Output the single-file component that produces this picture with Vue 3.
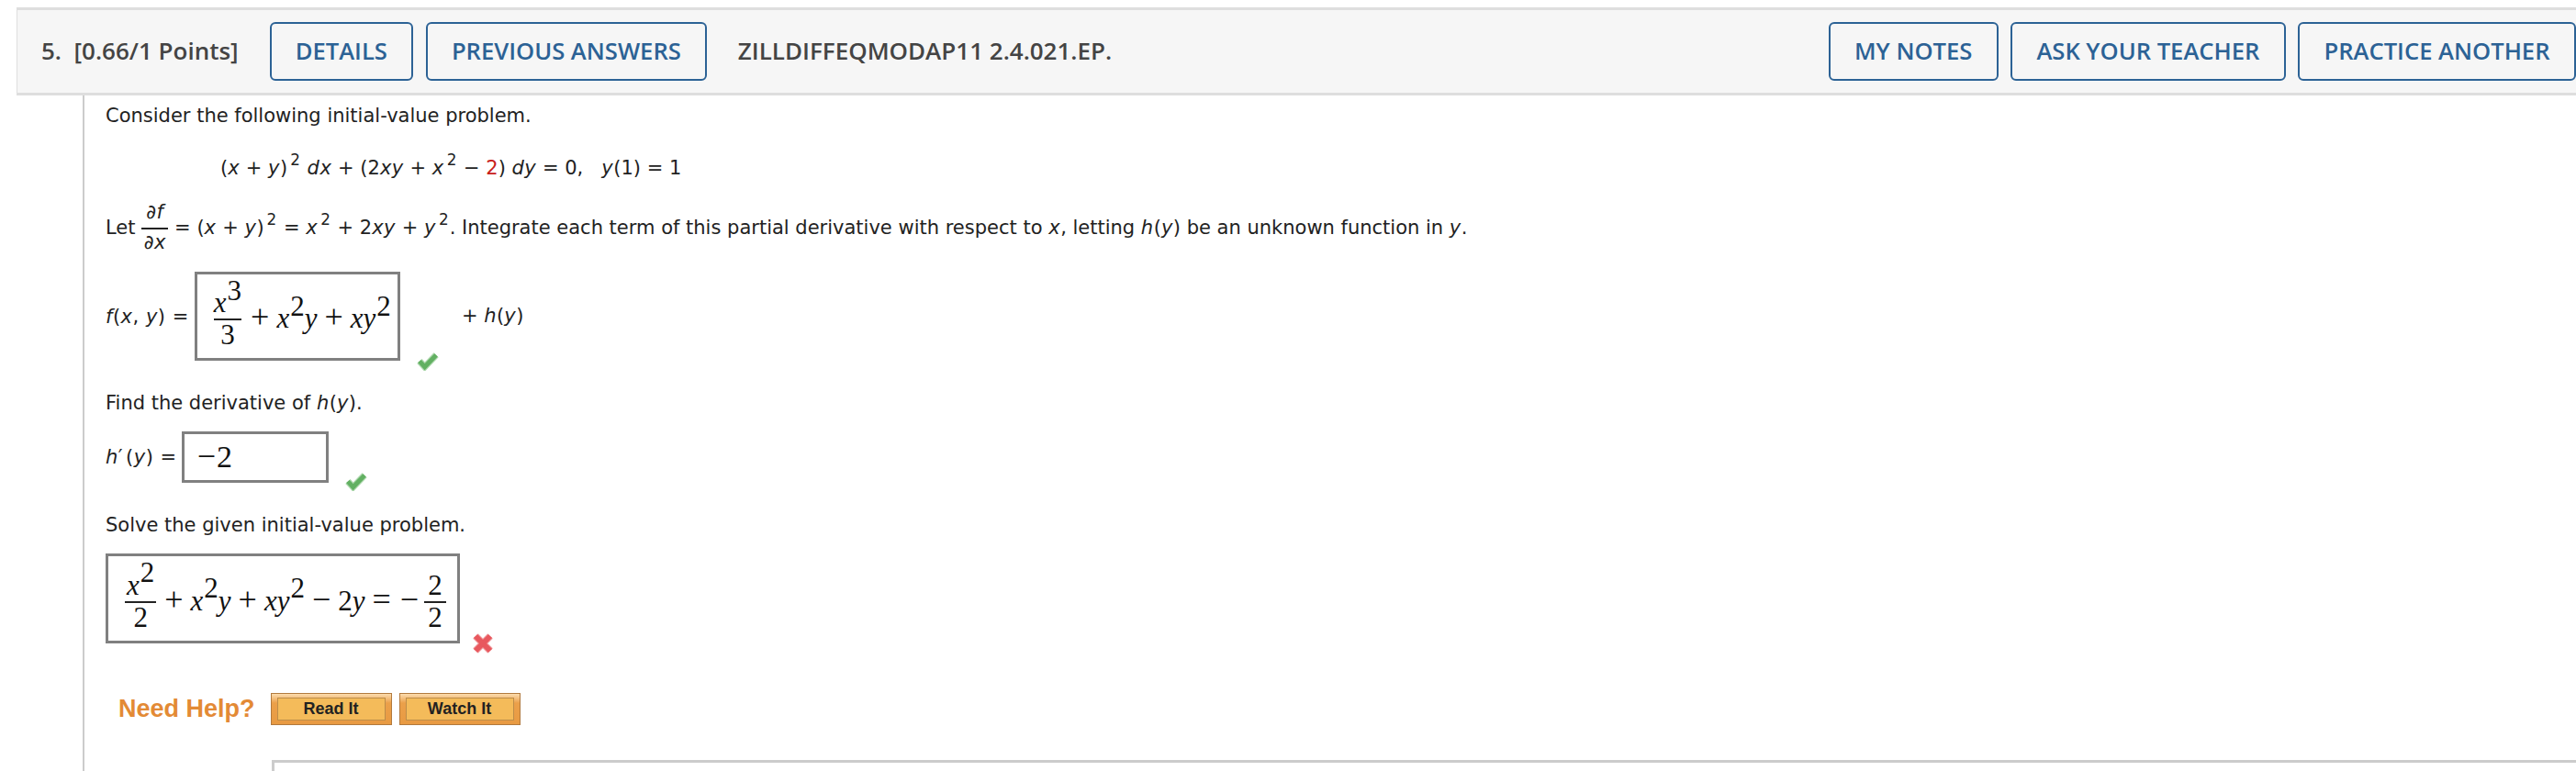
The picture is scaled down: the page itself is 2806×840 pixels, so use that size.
<script setup>
const leftButtons = ['DETAILS', 'PREVIOUS ANSWERS']
const rightButtons = ['MY NOTES', 'ASK YOUR TEACHER', 'PRACTICE ANOTHER']
</script>

<template>
  <div class="page">
    <header class="q-head">
      <div class="head-group">
        <span class="q-points">5.&nbsp; [0.66/1 Points]</span>
        <button v-for="b in leftButtons" :key="b" class="head-btn">{{ b }}</button>
        <span class="q-code">ZILLDIFFEQMODAP11 2.4.021.EP.</span>
      </div>
      <div class="head-group right">
        <button v-for="b in rightButtons" :key="b" class="head-btn">{{ b }}</button>
      </div>
    </header>

    <main class="q-body">
      <p class="line intro">Consider the following initial-value problem.</p>

      <p class="line equation">
        (<i>x</i> + <i>y</i>)<sup>2</sup> <i>dx</i> + (2<i>xy</i> + <i>x</i><sup>2</sup> − <span class="red">2</span>) <i>dy</i> = 0,&nbsp;&nbsp; <i>y</i>(1) = 1
      </p>

      <div class="line let-row">
        <span>Let&nbsp;</span>
        <span class="frac small">
          <span class="num"><i>∂f</i></span>
          <span class="den"><i>∂x</i></span>
        </span>
        <span>&nbsp;= (<i>x</i> + <i>y</i>)<sup>2</sup> = <i>x</i><sup>2</sup> + 2<i>xy</i> + <i>y</i><sup>2</sup>. Integrate each term of this partial derivative with respect to <i>x</i>, letting <i>h</i>(<i>y</i>) be an unknown function in <i>y</i>.</span>
      </div>

      <div class="line answer-row fxy">
        <span class="lhs"><i>f</i>(<i>x</i>, <i>y</i>) =</span>
        <div class="answer-box box-f">
          <span class="math">
            <span class="frac">
              <span class="num"><i>x</i><sup>3</sup></span>
              <span class="den">3</span>
            </span>
            <span class="op">+</span><i>x</i><sup>2</sup><i>y</i><span class="op">+</span><i>xy</i><sup>2</sup>
          </span>
        </div>
        <svg class="mark check-f" viewBox="0 0 26 22">
          <path class="halo-g" d="M3.5 11 L9.5 17.5 L22.5 4" />
          <path class="core-g" d="M3.5 11 L9.5 17.5 L22.5 4" />
        </svg>
        <span class="plus-h">+ <i>h</i>(<i>y</i>)</span>
      </div>

      <p class="line find">Find the derivative of <i>h</i>(<i>y</i>).</p>

      <div class="line answer-row hprime">
        <span class="lhs"><i>h</i><span class="prime">′</span>(<i>y</i>) =</span>
        <div class="answer-box box-h">
          <span class="math"><span class="op-m">−</span>2</span>
        </div>
        <svg class="mark check-h" viewBox="0 0 26 22">
          <path class="halo-g" d="M3.5 11 L9.5 17.5 L22.5 4" />
          <path class="core-g" d="M3.5 11 L9.5 17.5 L22.5 4" />
        </svg>
      </div>

      <p class="line solve">Solve the given initial-value problem.</p>

      <div class="line answer-row solution">
        <div class="answer-box box-s">
          <span class="math">
            <span class="frac wide">
              <span class="num"><i>x</i><sup>2</sup></span>
              <span class="den">2</span>
            </span>
            <span class="op">+</span><i>x</i><sup>2</sup><i>y</i><span class="op">+</span><i>xy</i><sup>2</sup><span class="op">−</span>2<i>y</i><span class="op">=</span><span class="op op-l">−</span><span class="frac tiny">
              <span class="num">2</span>
              <span class="den">2</span>
            </span>
          </span>
        </div>
        <svg class="mark cross" viewBox="0 0 24 24">
          <path class="halo-r" d="M4 4 L20 20 M20 4 L4 20" />
          <path class="core-r" d="M4 4 L20 20 M20 4 L4 20" />
        </svg>
      </div>

      <div class="help-row">
        <span class="need-help">Need Help?</span>
        <button class="help-btn"><span>Read It</span></button>
        <button class="help-btn"><span>Watch It</span></button>
      </div>

      <div class="next-box"></div>
    </main>
  </div>
</template>

<style>
html, body {
  margin: 0;
  background: #fff;
  overflow: hidden;
}
</style>

<style scoped>
.page {
  width: 2806px;
  height: 840px;
  overflow: hidden;
  padding-top: 8px;
  box-sizing: border-box;
  font-family: "DejaVu Sans", sans-serif;
  font-size: 21px;
  color: #222;
}

.q-head {
  margin-left: 18px;
  height: 96px;
  box-sizing: border-box;
  display: flex;
  align-items: center;
  justify-content: space-between;
  background: #f6f6f6;
  border: 3px solid #dedede;
  border-right: none;
  border-left-width: 1px;
  font-family: "Open Sans", sans-serif;
}

.head-group {
  display: flex;
  align-items: center;
  gap: 14px;
}

.head-group.right {
  gap: 13px;
}

.q-points {
  margin-left: 26px;
  margin-right: 20px;
  padding-bottom: 2px;
  font-size: 26px;
  font-weight: 600;
  color: #444;
}

.q-code {
  margin-left: 20px;
  padding-bottom: 2px;
  font-size: 26px;
  font-weight: 600;
  color: #444;
}

.head-btn {
  height: 64px;
  padding: 0 26px 2px;
  background: #f6f6f6;
  border: 2px solid #2c6295;
  border-radius: 6px;
  color: #2c6295;
  font-family: "Open Sans", sans-serif;
  font-size: 25.6px;
  font-weight: 600;
}

.right .head-btn {
  padding-left: 26.5px;
  padding-right: 26.5px;
}

.q-body {
  position: relative;
  margin-left: 90px;
  height: 736px;
  padding-left: 23px;
  border-left: 2px solid #ccc;
}

.line {
  margin: 0;
}

.intro {
  padding-top: 10px;
  line-height: 25px;
}

.equation {
  margin-top: 24px;
  margin-left: 125px;
  line-height: 40px;
}

i {
  letter-spacing: 0.5px;
}

sup {
  font-size: 0.8em;
  line-height: 0;
  margin-left: 3px;
  margin-right: 1px;
  vertical-align: 0.62em;
}

.red {
  color: #c8201a;
}

.let-row {
  margin-top: 10px;
  display: flex;
  align-items: center;
  height: 70px;
}

.frac {
  display: inline-flex;
  flex-direction: column;
  align-items: center;
  vertical-align: middle;
  line-height: 1;
}

.frac .num {
  border-bottom: 2px solid #222;
}

.frac.small .num {
  padding: 0 5px 6px;
}

.frac.small .den {
  padding-top: 4px;
}

.answer-row {
  position: relative;
  display: flex;
  align-items: center;
}

.lhs {
  margin-right: 6px;
  letter-spacing: 0.5px;
}

.hprime .lhs {
  margin-right: 5px;
}

.prime {
  margin-right: 3px;
}

.answer-box {
  box-sizing: border-box;
  display: flex;
  align-items: center;
  background: #fff;
  border: 3px solid #808080;
}

.math {
  font-family: "Liberation Serif", serif;
  font-size: 31px;
  color: #111;
  white-space: nowrap;
}

.math i {
  letter-spacing: 0;
}

.math sup {
  font-size: 1em;
  margin: 0 0 0 1px;
  vertical-align: 0.42em;
}

.math .op,
.math .op-m {
  font-size: 36px;
  line-height: 0;
}

.math .op {
  margin: 0 8px;
}

.math .op-m {
  margin-right: 1px;
}

.math .op-l {
  margin-left: 2px;
  margin-right: 8px;
}

.math .frac {
  margin-right: 2px;
  vertical-align: 17px;
}

.math .frac .num {
  width: 100%;
  text-align: center;
  padding-bottom: 2px;
}

.math .frac.wide .num {
  padding-left: 1px;
  padding-right: 1px;
}

.math .frac.tiny .num {
  padding-left: 2px;
  padding-right: 2px;
}

.fxy {
  margin-top: 13px;
}

.box-f {
  width: 224px;
  height: 97px;
  padding-left: 18px;
  padding-top: 5px;
}

.box-h {
  width: 160px;
  height: 56px;
  padding-left: 14px;
}

.box-h .math {
  font-size: 34px;
}

.box-s {
  width: 386px;
  height: 98px;
  padding-left: 19px;
  padding-top: 5px;
}

.mark {
  position: absolute;
  fill: none;
}

.halo-g {
  stroke: #aad6aa;
  stroke-width: 7.5;
}

.core-g {
  stroke: #62b062;
  stroke-width: 5;
}

.halo-r {
  stroke: #f2a7a9;
  stroke-width: 8;
}

.core-r {
  stroke: #e8585e;
  stroke-width: 6;
}

.check-f {
  left: 338px;
  top: 87px;
  width: 26px;
  height: 21px;
}

.check-h {
  left: 260px;
  top: 44px;
  width: 26px;
  height: 21px;
}

.cross {
  left: 399px;
  top: 86px;
  width: 24px;
  height: 24px;
}

.plus-h {
  position: absolute;
  left: 388px;
  top: 36px;
}

.find {
  margin-top: 34px;
}

.hprime {
  margin-top: 19px;
}

.solve {
  margin-top: 34px;
}

.solution {
  margin-top: 19px;
}

.help-row {
  margin-top: 54px;
  margin-left: 14px;
  display: flex;
  align-items: center;
  gap: 8px;
}

.need-help {
  margin-right: 9px;
  font-family: "Liberation Sans", sans-serif;
  font-size: 27px;
  font-weight: 700;
  color: #e38a35;
}

.help-btn {
  width: 132px;
  height: 35px;
  padding: 4px 6px;
  box-sizing: border-box;
  background: linear-gradient(#fcdcae, #eba04a 30%, #e89a42);
  border: 1px solid #b27a3e;
}

.help-btn span {
  display: block;
  height: 100%;
  box-sizing: border-box;
  line-height: 23px;
  background: #f4bb5a;
  border: 1px solid #bd8d4a;
  font-family: "Liberation Sans", sans-serif;
  font-size: 18px;
  font-weight: 700;
  color: #222;
}

.next-box {
  margin-top: 38px;
  margin-left: 181px;
  height: 60px;
  border: 3px solid #ccc;
  border-right: none;
}
</style>
